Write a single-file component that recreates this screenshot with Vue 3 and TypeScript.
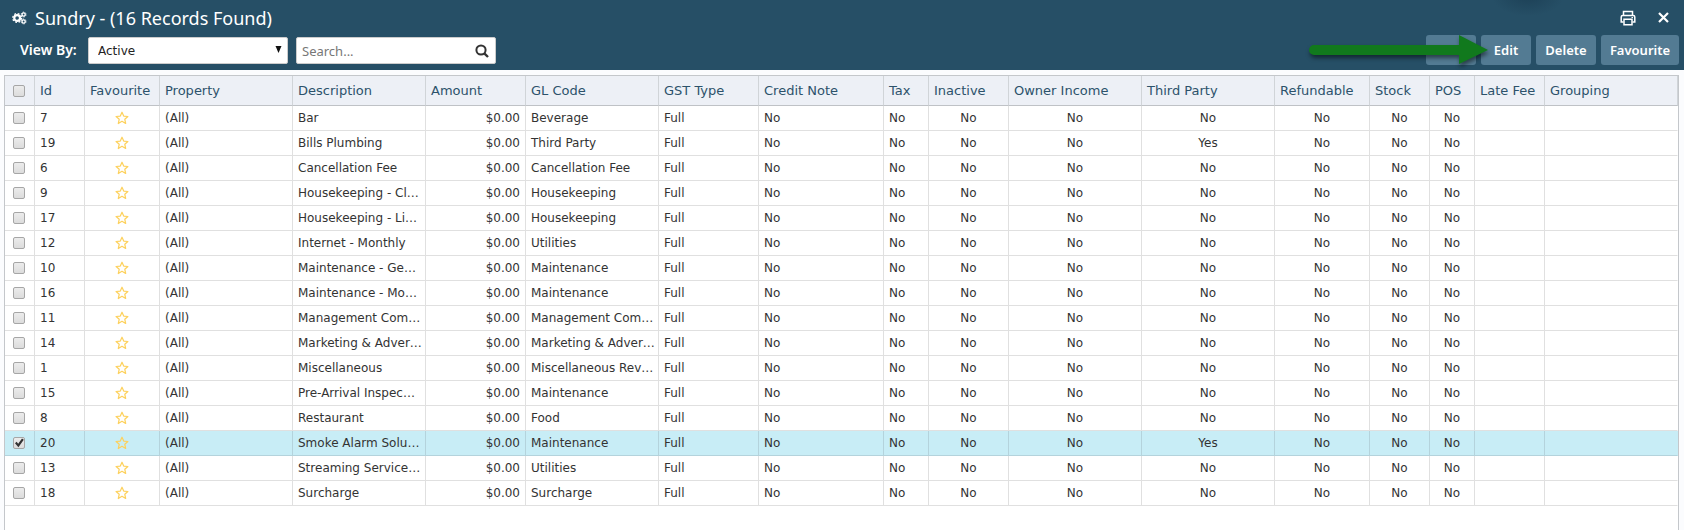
<script setup lang="ts">
import { ref } from 'vue'

interface Column {
  key: string
  label: string
  cls: string
}

interface Sundry {
  id: number
  description: string
  gl: string
  third: string
}

const columns: Column[] = [
  { key: 'id', label: 'Id', cls: 'w50' },
  { key: 'favourite', label: 'Favourite', cls: 'w75' },
  { key: 'property', label: 'Property', cls: 'w133' },
  { key: 'description', label: 'Description', cls: 'w133' },
  { key: 'amount', label: 'Amount', cls: 'w100' },
  { key: 'gl', label: 'GL Code', cls: 'w133' },
  { key: 'gst', label: 'GST Type', cls: 'w100' },
  { key: 'credit', label: 'Credit Note', cls: 'w125' },
  { key: 'tax', label: 'Tax', cls: 'w45' },
  { key: 'inactive', label: 'Inactive', cls: 'w80' },
  { key: 'owner', label: 'Owner Income', cls: 'w133' },
  { key: 'third', label: 'Third Party', cls: 'w133' },
  { key: 'refundable', label: 'Refundable', cls: 'w95' },
  { key: 'stock', label: 'Stock', cls: 'w60' },
  { key: 'pos', label: 'POS', cls: 'w45' },
  { key: 'late', label: 'Late Fee', cls: 'w70' },
  { key: 'grouping', label: 'Grouping', cls: 'rest' },
]

const make = (id: number, description: string, gl: string, third = 'No'): Sundry => ({ id, description, gl, third })

const rows: Sundry[] = [
  make(7, 'Bar', 'Beverage'),
  make(19, 'Bills Plumbing', 'Third Party', 'Yes'),
  make(6, 'Cancellation Fee', 'Cancellation Fee'),
  make(9, 'Housekeeping - Cl…', 'Housekeeping'),
  make(17, 'Housekeeping - Li…', 'Housekeeping'),
  make(12, 'Internet - Monthly', 'Utilities'),
  make(10, 'Maintenance - Ge…', 'Maintenance'),
  make(16, 'Maintenance - Mo…', 'Maintenance'),
  make(11, 'Management Com…', 'Management Com…'),
  make(14, 'Marketing & Adver…', 'Marketing & Adver…'),
  make(1, 'Miscellaneous', 'Miscellaneous Rev…'),
  make(15, 'Pre-Arrival Inspec…', 'Maintenance'),
  make(8, 'Restaurant', 'Food'),
  make(20, 'Smoke Alarm Solu…', 'Maintenance', 'Yes'),
  make(13, 'Streaming Service…', 'Utilities'),
  make(18, 'Surcharge', 'Surcharge'),
]

const selected = ref<number[]>([20])
const view = ref('Active')
const search = ref('')
</script>

<template>
  <div class="page">
    <header class="bar">
      <div class="title-row">
        <svg class="gears" viewBox="0 0 16 14" aria-hidden="true">
          <circle cx="5.5" cy="7" r="3.1" fill="none" stroke="currentColor" stroke-width="2.4" />
          <circle cx="5.5" cy="7" r="4.700" fill="none" stroke="currentColor" stroke-width="1.4" stroke-dasharray="1.9 1.79" />
          <circle cx="12.4" cy="3.3" r="1.7" fill="none" stroke="currentColor" stroke-width="1.4" />
          <circle cx="12.4" cy="3.3" r="2.6" fill="none" stroke="currentColor" stroke-width="1" stroke-dasharray="1.4 1.32" />
          <circle cx="12.4" cy="10.7" r="1.7" fill="none" stroke="currentColor" stroke-width="1.4" />
          <circle cx="12.4" cy="10.7" r="2.6" fill="none" stroke="currentColor" stroke-width="1" stroke-dasharray="1.4 1.32" />
        </svg>
        <h1>Sundry - (16 Records Found)</h1>
        <button class="icon-btn" type="button" aria-label="Print">
          <svg viewBox="0 0 16 16" width="16" height="16" fill="none" stroke="currentColor" stroke-width="1.5" aria-hidden="true">
            <path d="M3.500 5.500V1.500h9v4M3.500 12H1.200V7q0-1.500 1.500-1.500h10.600q1.500 0 1.500 1.500v5H12.500" />
            <path d="M4 9.200h8v5.500H4z" />
            <path d="M11.500 7.500h1.500" stroke-width="1" />
          </svg>
        </button>
        <button class="icon-btn" type="button" aria-label="Close">
          <svg viewBox="0 0 16 16" width="16" height="16" fill="none" stroke="currentColor" stroke-width="2.200" aria-hidden="true">
            <path d="M3 3l9 9M12 3l-9 9" />
          </svg>
        </button>
      </div>
      <div class="tools">
        <label class="view-label" for="view">View By:</label>
        <span class="select-wrap">
          <select id="view" v-model="view"><option>Active</option></select>
          <svg class="caret" viewBox="0 0 7 7" aria-hidden="true"><path d="M0.500 0h6L3.500 7z" fill="currentColor" /></svg>
        </span>
        <form class="search" role="search" @submit.prevent>
          <input v-model="search" type="text" placeholder="Search..." aria-label="Search" />
          <button type="submit" aria-label="Search">
            <svg viewBox="0 0 14 14" width="14" height="14" fill="none" stroke="currentColor" aria-hidden="true">
              <circle cx="6" cy="6" r="4.600" stroke-width="2" />
              <path d="M9.300 9.300l3.700 3.700" stroke-width="2.400" />
            </svg>
          </button>
        </form>
        <div class="actions">
          <button class="add" type="button" aria-label="Add">
            <svg class="arrow" viewBox="0 0 188 40" aria-hidden="true">
              <path d="M9 15H154V5L183 20L154 34V25H9a5 5 0 0 1 0-10z" fill="#11791d" />
            </svg>
          </button>
          <button class="edit" type="button">Edit</button>
          <button class="delete" type="button">Delete</button>
          <button class="fav" type="button">Favourite</button>
        </div>
      </div>
    </header>

    <main class="grid">
      <table>
        <colgroup>
          <col class="w30" />
          <col v-for="c in columns" :key="c.key" :class="c.cls" />
        </colgroup>
        <thead>
          <tr>
            <th class="check"><input type="checkbox" aria-label="Select all" /></th>
            <th v-for="c in columns" :key="c.key" scope="col">{{ c.label }}</th>
          </tr>
        </thead>
        <tbody>
          <tr v-for="r in rows" :key="r.id" :class="{ on: selected.includes(r.id) }">
            <td class="check"><input v-model="selected" type="checkbox" :value="r.id" :aria-label="`Select ${r.description}`" /></td>
            <td>{{ r.id }}</td>
            <td class="center">
              <button class="star" type="button" aria-label="Mark as favourite">
                <svg viewBox="0 0 14 14" width="14" height="14" aria-hidden="true">
                  <path d="M7 1.200L8.700 5.100L12.900 5.500L9.800 8.300L10.700 12.500L7 10.300L3.300 12.500L4.200 8.300L1.100 5.500L5.300 5.100z" fill="none" stroke="#fdd15c" stroke-width="1.200" stroke-linejoin="round" />
                </svg>
              </button>
            </td>
            <td>(All)</td>
            <td>{{ r.description }}</td>
            <td class="right">$0.00</td>
            <td>{{ r.gl }}</td>
            <td>Full</td>
            <td>No</td>
            <td>No</td>
            <td class="center">No</td>
            <td class="center">No</td>
            <td class="center">{{ r.third }}</td>
            <td class="center">No</td>
            <td class="center">No</td>
            <td class="center">No</td>
            <td></td>
            <td></td>
          </tr>
        </tbody>
      </table>
    </main>
  </div>
</template>

<style>
body {
  margin: 0;
  background: #fbfcfe;
}
</style>

<style scoped>
* {
  box-sizing: border-box;
}
.page {
  display: flex;
  flex-direction: column;
  min-height: 100vh;
  color: #333;
  font: 12px/24px Verdana, 'DejaVu Sans', sans-serif;
}
button {
  padding: 0;
  border: 0;
  background: none;
  color: inherit;
  font: inherit;
}
svg {
  display: block;
}
.bar {
  height: 70px;
  color: #fff;
  background: radial-gradient(ellipse 36px 20px at 1528px -4px, #1d4157, #264f66);
}
.title-row {
  display: flex;
  align-items: center;
  height: 35px;
  padding: 0 12px;
}
.gears {
  width: 15px;
  height: 14px;
}
h1 {
  flex: 1;
  margin: 0 0 0 8px;
  font: 400 18px/24px 'Noto Sans', sans-serif;
}
.icon-btn {
  width: 16px;
  margin-left: 20px;
}
.tools {
  display: flex;
  height: 30px;
  padding: 0 5px 0 20px;
}
.view-label {
  width: 68px;
  font: 600 14px/30px 'Noto Sans', sans-serif;
}
.select-wrap {
  position: relative;
  width: 200px;
  height: 27px;
  margin-top: 2px;
}
.select-wrap select {
  appearance: none;
  width: 100%;
  height: 100%;
  padding: 0 9px;
  border: 1px solid #ccc;
  border-radius: 2px;
  background: #fff;
  color: #222;
  font: 12px 'DejaVu Sans', sans-serif;
}
.caret {
  position: absolute;
  top: 9px;
  right: 6px;
  width: 7px;
  height: 7px;
  color: #111;
  pointer-events: none;
}
.search {
  display: flex;
  align-items: center;
  width: 200px;
  height: 27px;
  margin: 2px 0 0 8px;
  padding: 0 6px 0 5px;
  border: 1px solid #ccc;
  border-radius: 2px;
  background: #fff;
  color: #333;
}
.search input {
  flex: 1;
  min-width: 0;
  padding: 0;
  border: 0;
  outline: 0;
  background: none;
  font: 13px/20px 'Noto Sans', sans-serif;
}
.search input::placeholder {
  color: #777;
}
.actions {
  display: flex;
  gap: 5px;
  margin-left: auto;
}
.actions button {
  height: 30px;
  border-radius: 3px;
  background: #537b93;
  font: 600 13px/30px 'Noto Sans', sans-serif;
}
.actions .add,
.actions .edit {
  width: 50px;
}
.actions .delete {
  width: 60px;
}
.actions .fav {
  width: 78px;
}
.add {
  position: relative;
}
.arrow {
  position: absolute;
  top: -5px;
  right: -17px;
  z-index: 1;
  width: 188px;
  height: 40px;
  filter: drop-shadow(1px 3px 2px rgba(0, 0, 0, 0.5));
}
.grid {
  flex: 1;
  margin: 5px 5px 0 4px;
  border: 1px solid #c4c7cb;
  border-bottom: 0;
  background: #fff;
}
table {
  width: 100%;
  table-layout: fixed;
  border-collapse: separate;
  border-spacing: 0;
}
.w30 { width: 30px; }
.w45 { width: 45px; }
.w50 { width: 50px; }
.w60 { width: 60px; }
.w70 { width: 70px; }
.w75 { width: 75px; }
.w80 { width: 80px; }
.w95 { width: 95px; }
.w100 { width: 100px; }
.w125 { width: 125px; }
.w133 { width: 133px; }
th,
td {
  height: 25px;
  padding: 0 5px;
  overflow: hidden;
  border-right: 1px solid #e0e0e0;
  border-bottom: 1px solid #e0e0e0;
  text-align: left;
  white-space: nowrap;
}
th {
  height: 30px;
  border-right-color: #d0d4d8;
  border-bottom-color: #bfc2c6;
  background: #edf0f6;
  color: #2c526b;
  font-size: 13px;
  font-weight: 400;
}
.center {
  text-align: center;
}
.right {
  text-align: right;
}
.on td {
  border-color: #b4d3dc;
  background: #c8edf6;
}
td:last-child {
  border-right-color: transparent;
}
.check {
  padding: 0 8px;
}
.check input {
  appearance: none;
  display: block;
  width: 12px;
  height: 12px;
  margin: 0;
  border: 1px solid #a6a6a6;
  border-radius: 2px;
  background: linear-gradient(#ececec, #dcdcdc);
}
.check input:checked::before {
  content: '';
  display: block;
  width: 10px;
  height: 10px;
  background: #333;
  clip-path: polygon(10% 52%, 26% 38%, 42% 58%, 80% 4%, 98% 18%, 44% 92%);
}
.star {
  display: block;
  width: 14px;
  margin: 0 auto;
}
</style>
